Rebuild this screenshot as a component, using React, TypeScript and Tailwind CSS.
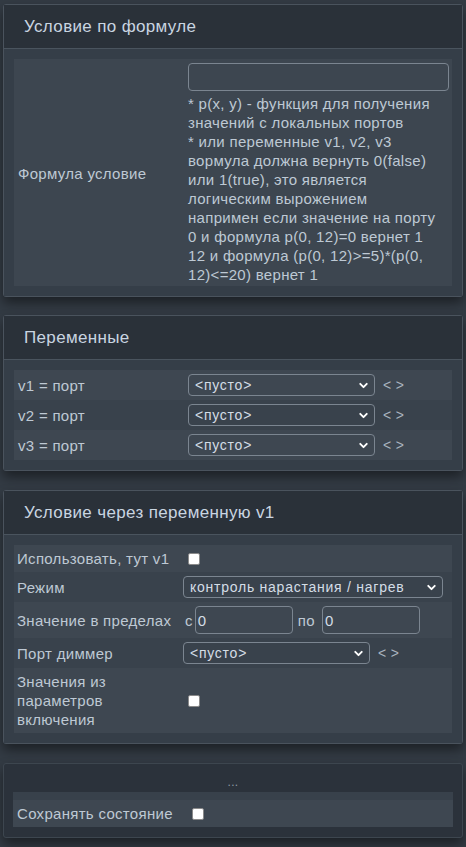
import { ChevronDown } from "lucide-react";

const font = "font-['Liberation_Sans','DejaVu_Sans',sans-serif]";

function Panel({
  title,
  children,
  className = "",
}: {
  title: string;
  children: React.ReactNode;
  className?: string;
}) {
  return (
    <section
      className={`rounded-[3px] border border-[#4a535d] shadow-[0_6px_12px_rgba(0,0,0,0.45)] ${className}`}
    >
      <div className="flex h-[44px] items-center border-b border-[#4a545e] bg-[#2a3139] pl-[20px] text-[17px] tracking-[0.35px] text-[#c9d5e1]">
        {title}
      </div>
      <div className="bg-[#353e48] px-[10px] py-[10px]">{children}</div>
    </section>
  );
}

function Select({ value, width }: { value: string; width: string }) {
  return (
    <div
      className={`flex h-[22px] items-center justify-between rounded-[4px] border border-[#7b8590] pl-[6px] pr-[4px] text-[14px] tracking-[0.75px] text-[#d4dde6] ${width}`}
    >
      <span>{value}</span>
      <ChevronDown size={13} strokeWidth={3.5} className="text-white" />
    </div>
  );
}

function Arrows() {
  return <span className="ml-[8px] text-[14px] text-[#a9b4bf]">&lt; &gt;</span>;
}

function Checkbox() {
  return (
    <span className="ml-[5px] inline-block h-[12px] w-[12px] rounded-[2px] border border-[#8a8a8a] bg-white" />
  );
}

export default function App() {
  const vars = ["v1", "v2", "v3"];

  return (
    <div
      className={`min-h-screen bg-[#333b44] px-[3px] pt-[4px] text-[15px] leading-[19px] tracking-[0.3px] text-[#bec9d4] ${font}`}
    >
      {/* Условие по формуле */}
      <Panel title="Условие по формуле">
        <div className="grid grid-cols-[174px_1fr] bg-[#3d4650] pb-[2px] pt-[4px]">
          <div className="flex items-center pl-[4px]">Формула условие</div>
          <div>
            <div className="h-[28px] w-[261px] rounded-[4px] border border-[#7b8590]" />
            <p className="mt-[3px]">
              * p(x, y) - функция для получения
              <br />
              значений с локальных портов
              <br />
              * или переменные v1, v2, v3
              <br />
              вормула должна вернуть 0(false)
              <br />
              или 1(true), это является
              <br />
              логическим вырожением
              <br />
              напримен если значение на порту
              <br />
              0 и формула p(0, 12)=0 вернет 1
              <br />
              12 и формула (p(0, 12)&gt;=5)*(p(0,
              <br />
              12)&lt;=20) вернет 1
            </p>
          </div>
        </div>
      </Panel>

      {/* Переменные */}
      <Panel title="Переменные" className="mt-[18px]">
        <div>
          {vars.map((v, i) => (
            <div
              key={v}
              className={`grid h-[30px] grid-cols-[174px_1fr] items-center ${
                i % 2 === 0 ? "bg-[#3e4751]" : "bg-[#39424c]"
              }`}
            >
              <div className="pl-[4px]">{v} = порт</div>
              <div className="flex items-center">
                <Select value="<пусто>" width="w-[187px]" />
                <Arrows />
              </div>
            </div>
          ))}
        </div>
      </Panel>

      {/* Условие через переменную v1 */}
      <Panel title="Условие через переменную v1" className="mt-[19px]">
        <div className="grid grid-cols-[169px_1fr]">
          <div className="flex h-[27px] items-center bg-[#3e4751] pl-[3px]">
            Использовать, тут v1
          </div>
          <div className="flex items-center bg-[#3e4751]">
            <Checkbox />
          </div>

          <div className="flex h-[30px] items-center bg-[#39424c] pl-[3px]">Режим</div>
          <div className="flex items-center bg-[#39424c]">
            <Select value="контроль нарастания / нагрев" width="w-[260px]" />
          </div>

          <div className="flex h-[36px] items-center whitespace-nowrap bg-[#3e4751] pl-[3px]">
            Значение в пределах
          </div>
          <div className="flex items-center bg-[#3e4751]">
            <span className="ml-[2px] mr-[2px]">с</span>
            <div className="flex h-[28px] w-[98px] items-center rounded-[4px] border border-[#7b8590] pl-[2px] text-[#d4dde6]">
              0
            </div>
            <span className="ml-[5px] mr-[7px]">по</span>
            <div className="flex h-[28px] w-[98px] items-center rounded-[4px] border border-[#7b8590] pl-[2px] text-[#d4dde6]">
              0
            </div>
          </div>

          <div className="flex h-[30px] items-center bg-[#39424c] pl-[3px]">Порт диммер</div>
          <div className="flex items-center bg-[#39424c]">
            <Select value="<пусто>" width="w-[187px]" />
            <Arrows />
          </div>

          <div className="flex h-[65px] items-center bg-[#3e4751] pl-[3px]">
            Значения из
            <br />
            параметров
            <br />
            включения
          </div>
          <div className="flex items-center bg-[#3e4751]">
            <Checkbox />
          </div>
        </div>
      </Panel>

      {/* ... */}
      <section className="mt-[19px] rounded-[3px] border border-[#3d464f] bg-[#2b323b] px-[9px] pb-[10px] shadow-[0_6px_12px_rgba(0,0,0,0.45)]">
        <div className="flex h-[28px] items-end justify-center pb-[4px] text-[12px] leading-[12px] text-[#8e99a4]">
          ...
        </div>
        <div className="h-[8px] bg-[#38414b]" />
        <div className="flex h-[27px] items-center bg-[#3e4751] pl-[4px]">
          <span>Сохранять состояние</span>
          <span className="ml-[19px] inline-block h-[12px] w-[12px] rounded-[2px] border border-[#8a8a8a] bg-white" />
        </div>
      </section>
    </div>
  );
}
